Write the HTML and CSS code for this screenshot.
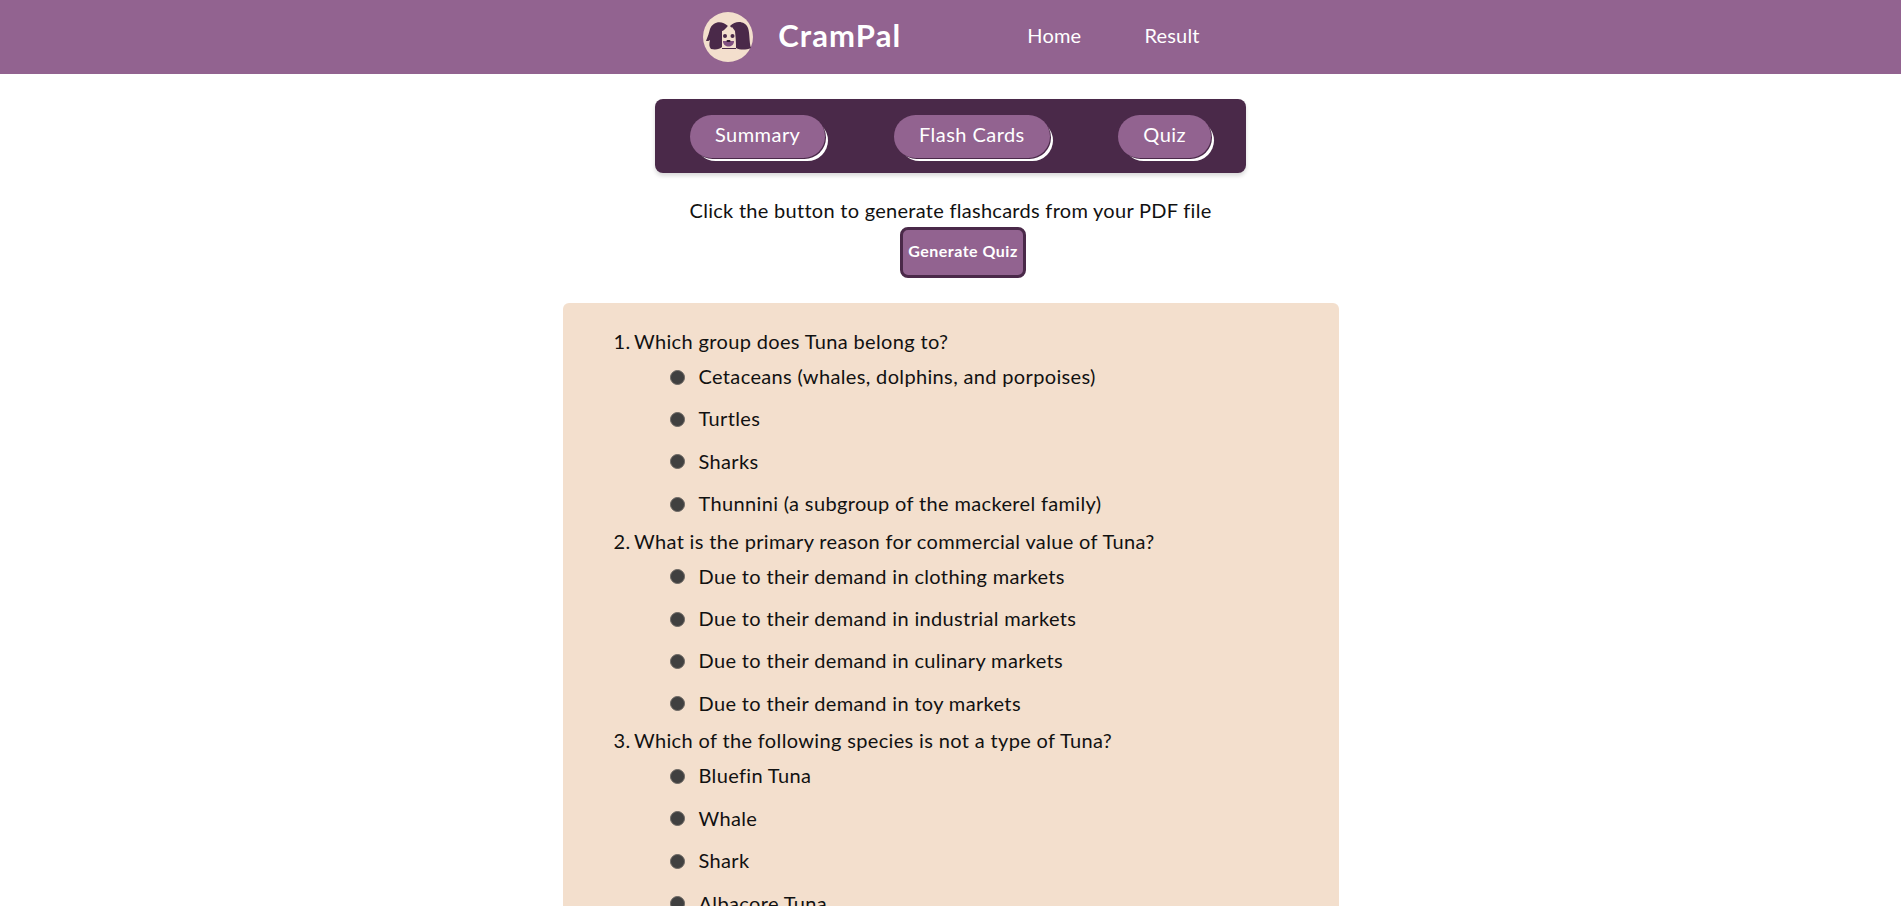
FILE: index.html
```html
<!DOCTYPE html>
<html>
<head>
    <title>CramPal</title>
    <link rel="stylesheet" href="styles.css">
</head>
<body>
    <header class="topbar">
        <svg class="logo" viewBox="0 0 50 50">
            <circle cx="25" cy="25" r="25" fill="#f3dfcd"/>
            <path d="M25 14C19 8 10 9 7 17C6 21 5 24 3 29C5 29 6 29 7 28C6 32 6 35 8 37C13 38 17 37 19 35L19 20Z" fill="#4a2949"/>
            <path d="M27 14C33 8 42 9 45 16C47 22 46 30 48 36C43 38 37 38 33 36L32 20Z" fill="#4a2949"/>
            <path d="M19 19L23 18L25 14L27 17L29 15L32 19L33 36L19 36Z" fill="#f3dfcd"/>
            <path d="M19 36.500H33" stroke="#4a2949" fill="none"/>
            <circle cx="22" cy="24" r="2" fill="#4a2949"/>
            <circle cx="29.500" cy="24" r="2" fill="#4a2949"/>
            <path d="M20 29H31C31 33 28 34.500 25.500 34.500C23 34.500 20 33 20 29Z" fill="#7f4f80"/>
            <rect x="23.500" y="28" width="4" height="2" rx="1" fill="#2e1a2e"/>
        </svg>
        <span class="brand">CramPal</span>
        <nav class="nav">
            <a href="#">Home</a>
            <a href="#">Result</a>
        </nav>
    </header>

    <main class="page">
        <div class="tabs">
            <button class="tab">Summary</button>
            <button class="tab">Flash Cards</button>
            <button class="tab">Quiz</button>
        </div>

        <p class="hint">Click the button to generate flashcards from your PDF file</p>
        <button class="generate">Generate Quiz</button>

        <section class="quiz">
            <ol class="questions">
                <li>Which group does Tuna belong to?
                    <ul class="options">
                        <li><span class="dot"></span>Cetaceans (whales, dolphins, and porpoises)</li>
                        <li><span class="dot"></span>Turtles</li>
                        <li><span class="dot"></span>Sharks</li>
                        <li><span class="dot"></span>Thunnini (a subgroup of the mackerel family)</li>
                    </ul>
                </li>
                <li>What is the primary reason for commercial value of Tuna?
                    <ul class="options">
                        <li><span class="dot"></span>Due to their demand in clothing markets</li>
                        <li><span class="dot"></span>Due to their demand in industrial markets</li>
                        <li><span class="dot"></span>Due to their demand in culinary markets</li>
                        <li><span class="dot"></span>Due to their demand in toy markets</li>
                    </ul>
                </li>
                <li>Which of the following species is not a type of Tuna?
                    <ul class="options">
                        <li><span class="dot"></span>Bluefin Tuna</li>
                        <li><span class="dot"></span>Whale</li>
                        <li><span class="dot"></span>Shark</li>
                        <li><span class="dot"></span>Albacore Tuna</li>
                    </ul>
                </li>
            </ol>
        </section>
    </main>
</body>
</html>
```

FILE: styles.css
```css
html, body {
    height: 100%;
    overflow: hidden;
}
body {
    margin: 0;
    background-color: #fff;
    color: #111;
    font-family: Lato, "Open Sans", sans-serif;
}
.topbar {
    height: 74px;
    background-color: #926390;
    display: flex;
    justify-content: center;
    align-items: center;
    color: #fff;
    padding-left: 2px;
}
.logo {
    width: 50px;
    height: 50px;
    margin-right: 25px;
}
.brand {
    width: 124px;
    padding-bottom: 4px;
    font-size: 31px;
    font-weight: 700;
    letter-spacing: 1.1px;
    margin-right: 125px;
}
.nav {
    display: flex;
    gap: 63px;
    padding-bottom: 4px;
}
.nav a {
    color: #fff;
    text-decoration: none;
    font-size: 20px;
    letter-spacing: 0.2px;
}
.page {
    display: flex;
    flex-direction: column;
    align-items: center;
}
.tabs {
    width: 521px;
    height: 74px;
    margin-top: 25px;
    padding: 0 35px;
    background-color: #4a2949;
    border-radius: 8px;
    box-shadow: 0 3px 4px rgba(0, 0, 0, 0.15);
    display: flex;
    justify-content: space-between;
    align-items: center;
}
.tab {
    height: 43px;
    padding: 0 25px 4px;
    border: none;
    border-radius: 22px;
    background-color: #926390;
    color: #fff;
    font-family: inherit;
    font-size: 20px;
    letter-spacing: 0.45px;
    box-shadow: 1px 1px 0 #4a2949, 4px 4px 0 -1px #fff;
}
.hint {
    margin: 25px 0 0;
    font-size: 20px;
    line-height: 24px;
    letter-spacing: 0.28px;
}
.generate {
    width: 126px;
    height: 51px;
    margin: 5px 0 0 25px;
    padding: 0 0 5px;
    border: 3px solid #4a2949;
    border-radius: 8px;
    background-color: #926390;
    color: #fff;
    font-family: inherit;
    font-size: 16px;
    font-weight: 700;
    letter-spacing: 0.5px;
}
.quiz {
    width: 776px;
    margin-top: 25px;
    box-sizing: border-box;
    padding: 25px 0 0 51px;
    background-color: #f3dfcd;
    border-radius: 6px;
}
.questions {
    counter-reset: question;
    margin: 0;
    padding: 0;
    list-style: none;
    font-size: 20px;
    line-height: 26px;
    letter-spacing: 0.35px;
}
.questions > li {
    counter-increment: question;
    margin-bottom: 11.500px;
}
.questions > li::before {
    content: counter(question) ". ";
    margin-right: -2px;
}
.options {
    list-style: none;
    margin: 0;
    padding: 9px 0 0 56px;
}
.options li {
    display: flex;
    align-items: center;
    height: 26px;
    margin-bottom: 16.4px;
}
.options li:last-child {
    margin-bottom: 0;
}
.dot {
    box-sizing: border-box;
    width: 15px;
    height: 15px;
    margin: 2px 14px 0 0;
    border: 1px solid #6a6662;
    border-radius: 50%;
    background-color: #404040;
}
```
